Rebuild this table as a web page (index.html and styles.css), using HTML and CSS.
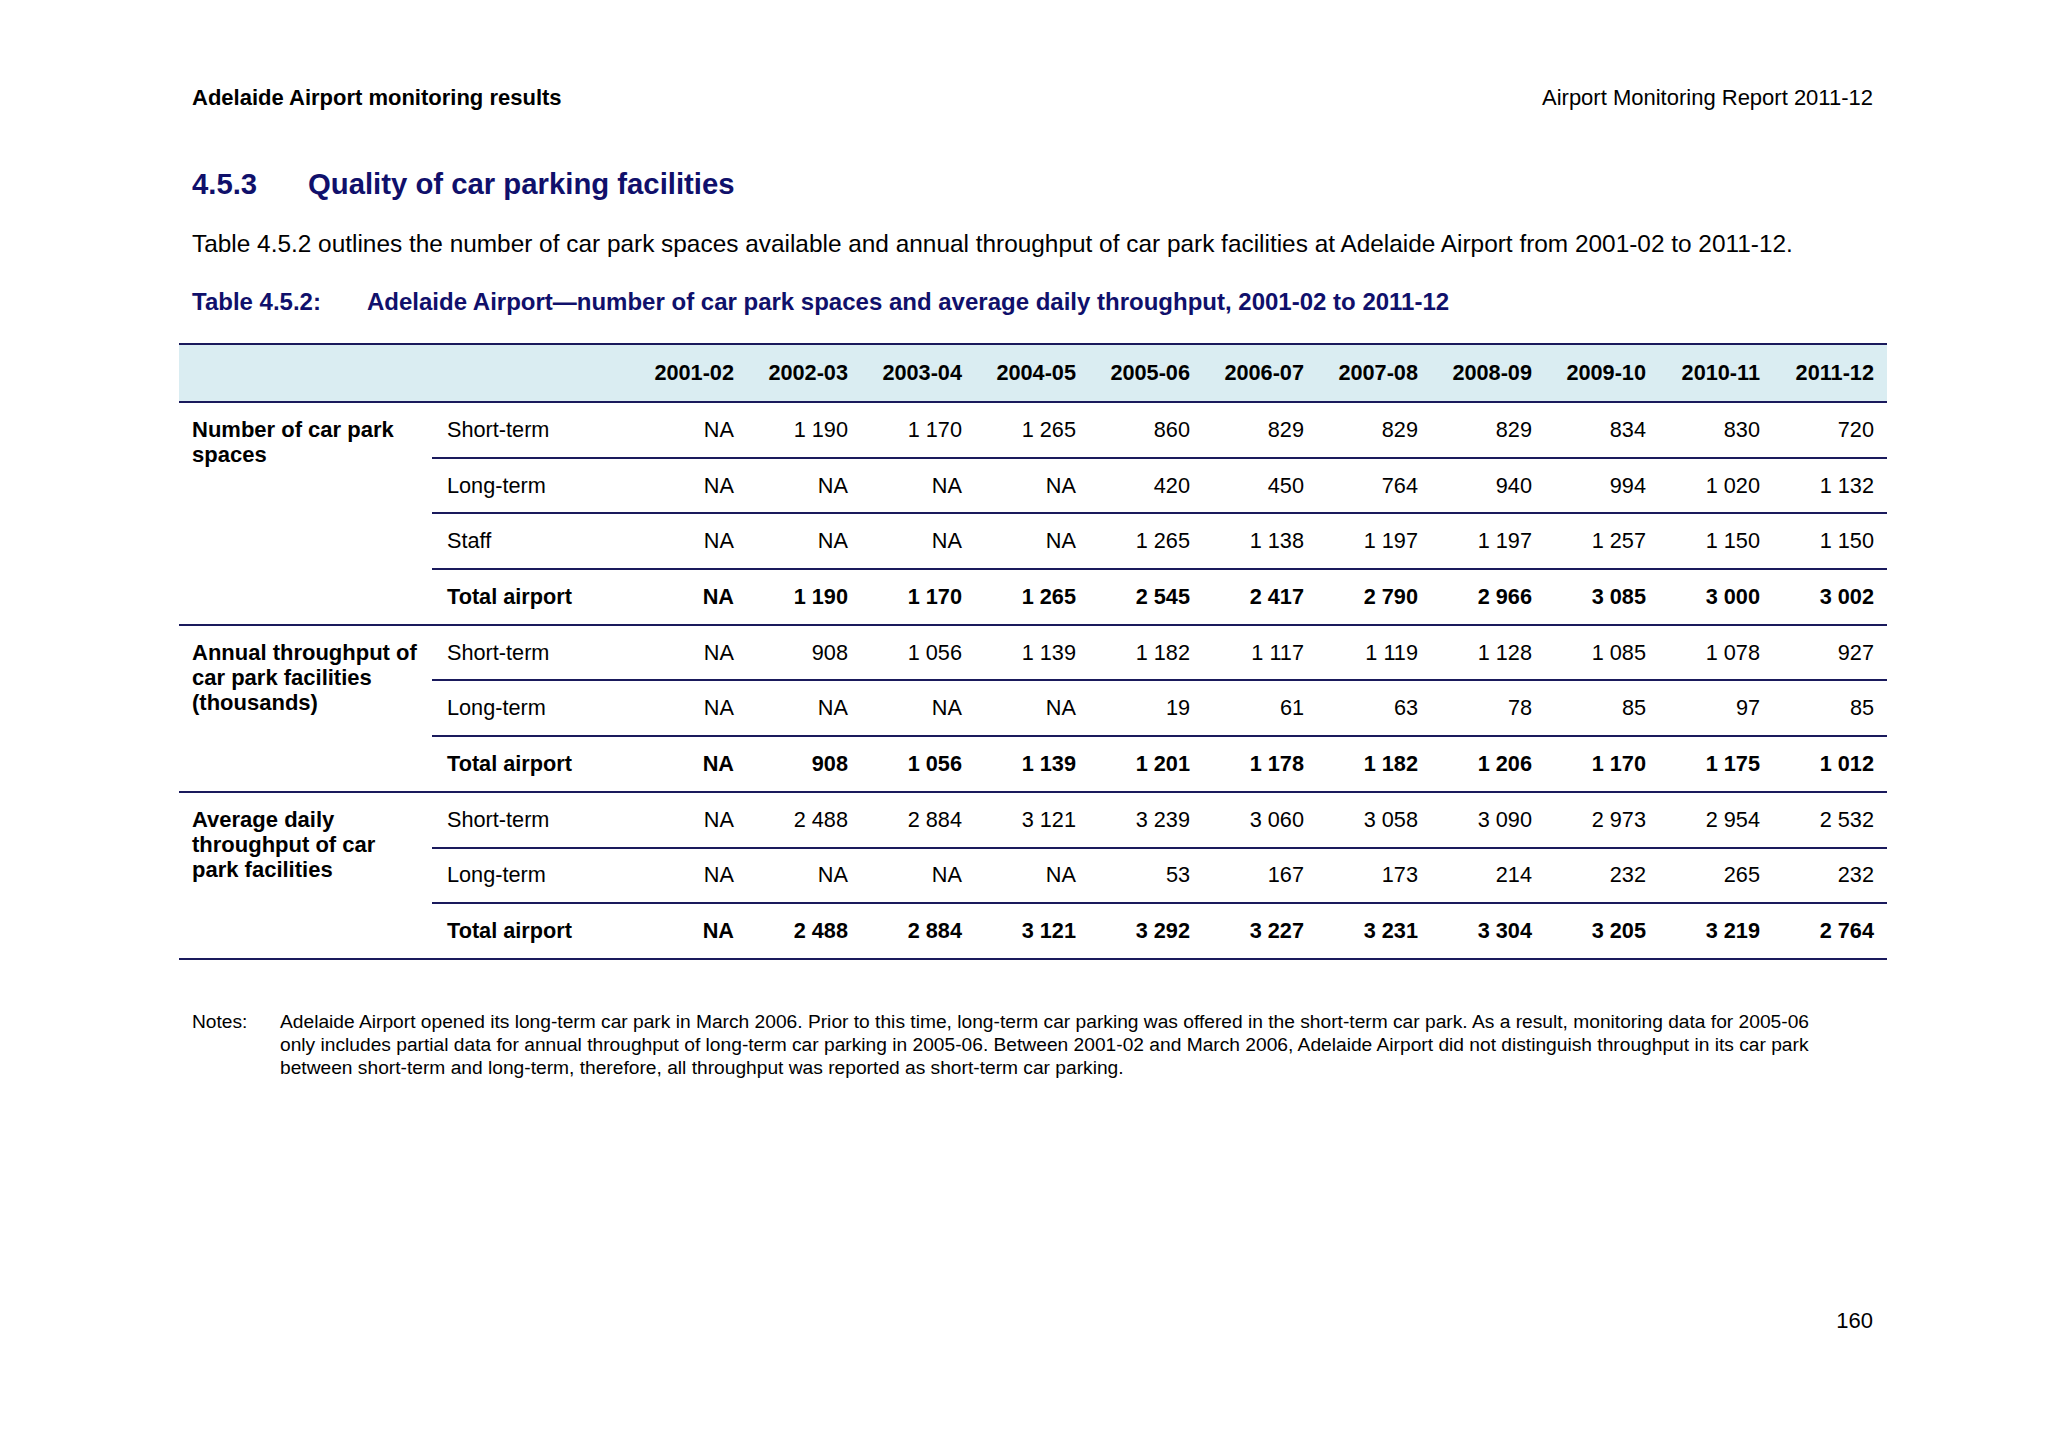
FILE: index.html
```html
<!DOCTYPE html>
<html lang="en">
<head>
<meta charset="utf-8">
<title>Adelaide Airport monitoring results</title>
<link rel="stylesheet" href="styles.css">
</head>
<body>
<div class="page">
  <header class="running-head">
    <span class="rh-left">Adelaide Airport monitoring results</span>
    <span class="rh-right">Airport Monitoring Report 2011-12</span>
  </header>

  <h2 class="section-title"><span class="sec-num">4.5.3</span><span>Quality of car parking facilities</span></h2>

  <p class="intro">Table 4.5.2 outlines the number of car park spaces available and annual throughput of car park facilities at Adelaide Airport from 2001-02 to 2011-12.</p>

  <p class="caption"><span class="cap-num">Table 4.5.2:</span><span>Adelaide Airport—number of car park spaces and average daily throughput, 2001-02 to 2011-12</span></p>

  <table class="data">
    <colgroup>
      <col class="c-group"><col class="c-sub">
      <col class="c-num"><col class="c-num"><col class="c-num"><col class="c-num"><col class="c-num"><col class="c-num"><col class="c-num"><col class="c-num"><col class="c-num"><col class="c-num"><col class="c-num">
    </colgroup>
    <thead>
      <tr>
        <th></th><th></th>
        <th>2001-02</th><th>2002-03</th><th>2003-04</th><th>2004-05</th><th>2005-06</th><th>2006-07</th><th>2007-08</th><th>2008-09</th><th>2009-10</th><th>2010-11</th><th>2011-12</th>
      </tr>
    </thead>
    <tbody>
      <tr>
        <td class="group" rowspan="4">Number of car park spaces</td>
        <td class="sub">Short-term</td>
        <td>NA</td><td>1 190</td><td>1 170</td><td>1 265</td><td>860</td><td>829</td><td>829</td><td>829</td><td>834</td><td>830</td><td>720</td>
      </tr>
      <tr>
        <td class="sub">Long-term</td>
        <td>NA</td><td>NA</td><td>NA</td><td>NA</td><td>420</td><td>450</td><td>764</td><td>940</td><td>994</td><td>1 020</td><td>1 132</td>
      </tr>
      <tr>
        <td class="sub">Staff</td>
        <td>NA</td><td>NA</td><td>NA</td><td>NA</td><td>1 265</td><td>1 138</td><td>1 197</td><td>1 197</td><td>1 257</td><td>1 150</td><td>1 150</td>
      </tr>
      <tr class="total">
        <td class="sub">Total airport</td>
        <td>NA</td><td>1 190</td><td>1 170</td><td>1 265</td><td>2 545</td><td>2 417</td><td>2 790</td><td>2 966</td><td>3 085</td><td>3 000</td><td>3 002</td>
      </tr>
      <tr>
        <td class="group" rowspan="3">Annual throughput of car park facilities (thousands)</td>
        <td class="sub">Short-term</td>
        <td>NA</td><td>908</td><td>1 056</td><td>1 139</td><td>1 182</td><td>1 117</td><td>1 119</td><td>1 128</td><td>1 085</td><td>1 078</td><td>927</td>
      </tr>
      <tr>
        <td class="sub">Long-term</td>
        <td>NA</td><td>NA</td><td>NA</td><td>NA</td><td>19</td><td>61</td><td>63</td><td>78</td><td>85</td><td>97</td><td>85</td>
      </tr>
      <tr class="total">
        <td class="sub">Total airport</td>
        <td>NA</td><td>908</td><td>1 056</td><td>1 139</td><td>1 201</td><td>1 178</td><td>1 182</td><td>1 206</td><td>1 170</td><td>1 175</td><td>1 012</td>
      </tr>
      <tr>
        <td class="group" rowspan="3">Average daily throughput of car park facilities</td>
        <td class="sub">Short-term</td>
        <td>NA</td><td>2 488</td><td>2 884</td><td>3 121</td><td>3 239</td><td>3 060</td><td>3 058</td><td>3 090</td><td>2 973</td><td>2 954</td><td>2 532</td>
      </tr>
      <tr>
        <td class="sub">Long-term</td>
        <td>NA</td><td>NA</td><td>NA</td><td>NA</td><td>53</td><td>167</td><td>173</td><td>214</td><td>232</td><td>265</td><td>232</td>
      </tr>
      <tr class="total">
        <td class="sub">Total airport</td>
        <td>NA</td><td>2 488</td><td>2 884</td><td>3 121</td><td>3 292</td><td>3 227</td><td>3 231</td><td>3 304</td><td>3 205</td><td>3 219</td><td>2 764</td>
      </tr>
    </tbody>
  </table>

  <div class="notes">
    <span class="notes-label">Notes:</span>
    <p class="notes-text">Adelaide Airport opened its long-term car park in March 2006. Prior to this time, long-term car parking was offered in the short-term car park. As a result, monitoring data for 2005-06 only includes partial data for annual throughput of long-term car parking in 2005-06. Between 2001-02 and March 2006, Adelaide Airport did not distinguish throughput in its car park between short-term and long-term, therefore, all throughput was reported as short-term car parking.</p>
  </div>

  <footer class="page-foot">160</footer>
</div>
</body>
</html>
```

FILE: styles.css
```css
html, body {
  margin: 0;
  padding: 0;
  background: #ffffff;
}

body {
  font-family: "Liberation Sans", Arial, sans-serif;
  color: #000000;
}

.page {
  width: 2048px;
  height: 1447px;
  box-sizing: border-box;
  padding: 86px 162px 0 179px;
  display: flex;
  flex-direction: column;
}

.running-head {
  display: flex;
  justify-content: space-between;
  padding: 0 13px;
  font-size: 22px;
  line-height: 24px;
}

.rh-left {
  font-weight: bold;
}

.section-title {
  margin: 57px 0 0 0;
  padding-left: 13px;
  font-size: 29.3px;
  line-height: 34px;
  font-weight: bold;
  color: #10106b;
  display: flex;
}

.sec-num {
  width: 116px;
}

.intro {
  margin: 29px 0 0 0;
  padding-left: 13px;
  font-size: 24.4px;
  line-height: 28px;
  white-space: nowrap;
}

.caption {
  margin: 30px 0 0 0;
  padding-left: 13px;
  font-size: 24px;
  line-height: 28px;
  font-weight: bold;
  color: #10106b;
  display: flex;
  white-space: nowrap;
}

.cap-num {
  width: 175px;
}

.data {
  margin-top: 27px;
  border-collapse: collapse;
  table-layout: fixed;
  width: 1707px;
  font-size: 21.7px;
  border-top: 2px solid #1a1a5c;
  border-bottom: 2px solid #1a1a5c;
}

.c-group { width: 253px; }
.c-sub { width: 201px; }
.c-num { width: 114px; }

.data thead tr {
  background: #daedf2;
  height: 58px;
}

.data th {
  font-weight: bold;
  text-align: right;
  padding: 0 13px 0 0;
  border-bottom: 2px solid #1a1a5c;
  white-space: nowrap;
}

.data td {
  height: 53.7px;
  padding: 0 13px 0 0;
  text-align: right;
  border-bottom: 2px solid #1a1a5c;
  white-space: nowrap;
}

.data td.group {
  text-align: left;
  vertical-align: top;
  white-space: normal;
  font-weight: bold;
  font-size: 22px;
  line-height: 25px;
  padding: 14px 6px 0 13px;
}

.data td.sub {
  text-align: left;
  padding-left: 15px;
}

.data tr.total td {
  font-weight: bold;
}

.notes {
  margin-top: 50px;
  display: flex;
  padding-left: 13px;
  font-size: 19.2px;
  line-height: 23px;
}

.notes-label {
  width: 88px;
  flex: none;
}

.notes-text {
  margin: 0;
  width: 1560px;
}

.page-foot {
  margin-top: auto;
  margin-bottom: 113px;
  text-align: right;
  padding-right: 13px;
  font-size: 22px;
}
```
